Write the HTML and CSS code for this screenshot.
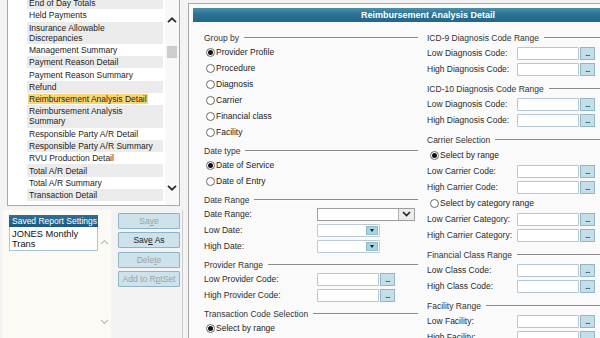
FILE: index.html
```html
<!DOCTYPE html>
<html>
<head>
<meta charset="utf-8">
<title>Reimbursement Analysis Detail</title>
<link rel="stylesheet" href="styles.css">
</head>
<body>
<div class="app">
  <aside class="side">
    <div class="listbox">
      <ul class="reports">
        <li class="alt">End of Day Totals</li>
        <li>Held Payments</li>
        <li class="alt">Insurance Allowable<br>Discrepancies</li>
        <li>Management Summary</li>
        <li class="alt">Payment Reason Detail</li>
        <li>Payment Reason Summary</li>
        <li class="alt">Refund</li>
        <li class="sel"><span>Reimbursement Analysis Detail</span></li>
        <li class="alt">Reimbursement Analysis<br>Summary</li>
        <li>Responsible Party A/R Detail</li>
        <li class="alt">Responsible Party A/R Summary</li>
        <li>RVU Production Detail</li>
        <li class="alt">Total A/R Detail</li>
        <li>Total A/R Summary</li>
        <li class="alt">Transaction Detail</li>
      </ul>
      <div class="vscroll">
        <svg class="chev-up" width="10" height="6" viewBox="0 0 10 6"><path d="M1 5.2 L5 1.3 L9 5.2" fill="none" stroke="#2b2b2b" stroke-width="1.7"/></svg>
        <div class="thumb"></div>
        <svg class="chev-down" width="10" height="6" viewBox="0 0 10 6"><path d="M1 0.8 L5 4.7 L9 0.8" fill="none" stroke="#2b2b2b" stroke-width="1.7"/></svg>
      </div>
    </div>
    <div class="saved-row">
      <div class="saved">
        <div class="saved-list">
          <div class="saved-head">Saved Report Settings</div>
          <div class="saved-item">JONES Monthly<br>Trans</div>
        </div>
        <div class="saved-scroll">
          <svg class="s-up" width="9" height="6" viewBox="0 0 9 6"><path d="M1 5 L4.5 1.5 L8 5" fill="none" stroke="#bdbdbd" stroke-width="1.2"/></svg>
          <svg class="s-down" width="9" height="6" viewBox="0 0 9 6"><path d="M1 1 L4.5 4.5 L8 1" fill="none" stroke="#bdbdbd" stroke-width="1.2"/></svg>
        </div>
      </div>
      <div class="btns">
        <button class="btn off">Sa<u>v</u>e</button>
        <button class="btn">Sav<u>e</u> As</button>
        <button class="btn off">Dele<u>t</u>e</button>
        <button class="btn off">Add to R<u>p</u>tSet</button>
      </div>
    </div>
  </aside>

  <section class="panel">
    <div class="titlebar">Reimbursement Analysis Detail</div>
    <div class="form">
      <div class="col col-a">
        <div class="sec">
          <div class="legend"><span>Group by</span></div>
          <div class="radio on"><i></i>Provider Profile</div>
          <div class="radio"><i></i>Procedure</div>
          <div class="radio"><i></i>Diagnosis</div>
          <div class="radio"><i></i>Carrier</div>
          <div class="radio"><i></i>Financial class</div>
          <div class="radio"><i></i>Facility</div>
        </div>
        <div class="sec">
          <div class="legend"><span>Date type</span></div>
          <div class="radio on"><i></i>Date of Service</div>
          <div class="radio"><i></i>Date of Entry</div>
        </div>
        <div class="sec">
          <div class="legend"><span>Date Range</span></div>
          <div class="row"><span class="lbl">Date Range:</span>
            <div class="select"><div class="sel-box"></div><div class="sel-btn"><svg width="9" height="6" viewBox="0 0 9 6"><path d="M1 1 L4.5 4.5 L8 1" fill="none" stroke="#222" stroke-width="1.6"/></svg></div></div>
          </div>
          <div class="row"><span class="lbl">Low Date:</span>
            <div class="date"><div class="date-box"></div><div class="date-btn"><b></b></div></div>
          </div>
          <div class="row"><span class="lbl">High Date:</span>
            <div class="date"><div class="date-box"></div><div class="date-btn"><b></b></div></div>
          </div>
        </div>
        <div class="sec">
          <div class="legend"><span>Provider Range</span></div>
          <div class="row"><span class="lbl">Low Provider Code:</span>
            <div class="code"><div class="code-box"></div><div class="dots">...</div></div>
          </div>
          <div class="row"><span class="lbl">High Provider Code:</span>
            <div class="code"><div class="code-box"></div><div class="dots">...</div></div>
          </div>
        </div>
        <div class="sec">
          <div class="legend"><span>Transaction Code Selection</span></div>
          <div class="radio on"><i></i>Select by range</div>
        </div>
      </div>

      <div class="col col-b">
        <div class="sec">
          <div class="legend"><span>ICD-9 Diagnosis Code Range</span></div>
          <div class="row"><span class="lbl">Low Diagnosis Code:</span>
            <div class="code"><div class="code-box"></div><div class="dots">...</div></div>
          </div>
          <div class="row"><span class="lbl">High Diagnosis Code:</span>
            <div class="code"><div class="code-box"></div><div class="dots">...</div></div>
          </div>
        </div>
        <div class="sec">
          <div class="legend"><span>ICD-10 Diagnosis Code Range</span></div>
          <div class="row"><span class="lbl">Low Diagnosis Code:</span>
            <div class="code"><div class="code-box"></div><div class="dots">...</div></div>
          </div>
          <div class="row"><span class="lbl">High Diagnosis Code:</span>
            <div class="code"><div class="code-box"></div><div class="dots">...</div></div>
          </div>
        </div>
        <div class="sec">
          <div class="legend"><span>Carrier Selection</span></div>
          <div class="radio on"><i></i>Select by range</div>
          <div class="row"><span class="lbl">Low Carrier Code:</span>
            <div class="code"><div class="code-box"></div><div class="dots">...</div></div>
          </div>
          <div class="row"><span class="lbl">High Carrier Code:</span>
            <div class="code"><div class="code-box"></div><div class="dots">...</div></div>
          </div>
          <div class="radio"><i></i>Select by category range</div>
          <div class="row"><span class="lbl">Low Carrier Category:</span>
            <div class="code"><div class="code-box"></div><div class="dots">...</div></div>
          </div>
          <div class="row"><span class="lbl">High Carrier Category:</span>
            <div class="code"><div class="code-box"></div><div class="dots">...</div></div>
          </div>
        </div>
        <div class="sec">
          <div class="legend"><span>Financial Class Range</span></div>
          <div class="row"><span class="lbl">Low Class Code:</span>
            <div class="code"><div class="code-box"></div><div class="dots">...</div></div>
          </div>
          <div class="row"><span class="lbl">High Class Code:</span>
            <div class="code"><div class="code-box"></div><div class="dots">...</div></div>
          </div>
        </div>
        <div class="sec">
          <div class="legend"><span>Facility Range</span></div>
          <div class="row"><span class="lbl">Low Facility:</span>
            <div class="code"><div class="code-box"></div><div class="dots">...</div></div>
          </div>
          <div class="row"><span class="lbl">High Facility:</span>
            <div class="code"><div class="code-box"></div><div class="dots">...</div></div>
          </div>
        </div>
      </div>
    </div>
  </section>
</div>
</body>
</html>
```

FILE: styles.css
```css
* { box-sizing: border-box; margin: 0; padding: 0; }
html, body { width: 600px; height: 338px; overflow: hidden; }
body {
  background: #f3f3f3;
  font-family: "Liberation Sans", Arial, sans-serif;
  font-size: 8.5px;
  color: #222;
}
.app { display: flex; width: 600px; height: 338px; overflow: hidden; }

/* ---------- left side ---------- */
.side { width: 188px; flex: none; display: flex; flex-direction: column; }
.listbox {
  margin: -3px 0 0 7px;
  width: 173px;
  height: 209px;
  flex: none;
  border: 1px solid #a9a9a9;
  background: #fff;
  display: flex;
  overflow: hidden;
}
.reports { list-style: none; flex: 1; padding: 0 2px 0 19px; margin-top: -1px; overflow: hidden; }
.reports li { line-height: 10px; padding: 1.15px 0 1.15px 2px; color: #1c1c1c; white-space: nowrap; }
.reports li.alt { background: #ebebeb; }
.reports li.sel span { display: inline-block; background: #fdd570; padding: 0 1px; margin-left: -1px; }
.vscroll { width: 14px; flex: none; display: flex; flex-direction: column; align-items: center; background: #f8f8f8; }
.chev-up { margin-top: 19px; }
.thumb { margin-top: 23px; width: 10px; height: 12px; background: #cdcdcd; }
.chev-down { margin-top: auto; margin-bottom: 14px; }

.saved-row {
  margin: 4px 0 0 3px;
  width: 180px;
  flex: 1;
  display: flex;
  border-right: 1px solid #cdcdcd;
}
.saved { width: 108px; flex: none; background: #fbfaf4; display: flex; padding: 5px 0 0 6px; }
.saved-list { width: 89px; flex: none; align-self: flex-start; }
.saved-head {
  height: 12px;
  line-height: 12px;
  background: linear-gradient(#2d6f98, #1d5a82);
  color: #fff;
  padding-left: 3px;
  white-space: nowrap;
}
.saved-item {
  background: #fff;
  border: 1px solid #a9c5d6;
  border-top: none;
  font-size: 9.3px;
  line-height: 10px;
  padding: 2px 2px 3px 2px;
  height: 24px;
  color: #111;
}
.saved-scroll { flex: 1; display: flex; flex-direction: column; align-items: center; }
.s-up { margin-top: 24px; }
.s-down { margin-top: auto; margin-bottom: 13px; }

.btns { margin-left: 7px; padding-top: 3px; width: 62px; display: flex; flex-direction: column; gap: 3.3px; }
.btn {
  height: 16px;
  width: 62px;
  background: #cde2ea;
  border: 1px solid #8db5c7;
  border-radius: 1px;
  font-family: "Liberation Sans", Arial, sans-serif;
  font-size: 8.5px;
  color: #222;
}
.btn.off { color: #9aa2a6; }

/* ---------- right panel ---------- */
.panel {
  margin-top: 3px;
  width: 480px;
  height: 420px;
  flex: none;
  border: 1px solid #a9a9a9;
  background: #fafafa;
}
.titlebar {
  margin: 4px 4px 0;
  height: 14px;
  line-height: 14px;
  text-align: center;
  color: #fff;
  font-weight: bold;
  font-size: 9px;
  background: linear-gradient(#4a90ad, #2b7393 45%, #22678a);
}
.form {
  display: grid;
  grid-template-columns: 214px 1fr;
  column-gap: 9px;
  padding: 9px 0 0 15px;
}
.col-a { padding-top: 1px; }
.sec { margin-bottom: 5px; }
.legend { display: flex; align-items: center; color: #333; white-space: nowrap; }
.col-a .legend { height: 12px; }
.col-b .legend { height: 14px; }
.legend::after { content: ""; flex: 1; margin-left: 5px; border-top: 1px solid #8a8a8a; border-bottom: 1px solid #fdfdfd; }

.radio { height: 16px; display: flex; align-items: center; padding-left: 2px; color: #222; }
.col-b .radio { padding-left: 3px; }
.radio i {
  width: 9px; height: 9px; border-radius: 50%;
  border: 1px solid #6a6a6a; background: #fff;
  margin-right: 1px; display: flex; align-items: center; justify-content: center;
}
.radio.on i::after { content: ""; width: 5px; height: 5px; border-radius: 50%; background: #111; }

.row { height: 16px; display: flex; align-items: center; }
.lbl { flex: none; color: #2a2a2a; white-space: nowrap; }
.col-a .lbl { width: 113px; }
.col-b .lbl { width: 90px; }

.code { width: 78px; height: 13px; display: flex; }
.code-box { flex: 1; background: #fff; border: 1px solid #b5c7d5; border-radius: 1px; }
.dots {
  width: 15px; margin-left: 1px;
  background: #c3dfe8;
  border: 1px solid #93b5c6;
  color: #1b3658;
  font-weight: bold;
  font-size: 7px;
  line-height: 11px;
  text-align: center;
  letter-spacing: -0.5px;
}

.select { width: 98px; height: 13px; display: flex; border: 1px solid #9d9d9d; background: #fff; }
.sel-box { flex: 1; }
.sel-btn { width: 16px; border-left: 1px solid #b0b0b0; background: #ececec; display: flex; align-items: center; justify-content: center; }

.date { width: 63px; height: 13px; display: flex; border: 1px solid #b9c9d6; background: #fff; padding: 1px; border-radius: 1px; }
.date-box { flex: 1; }
.date-btn { width: 12px; background: #a4d5e0; border: 1px solid #8fbccb; display: flex; align-items: center; justify-content: center; }
.date-btn b { width: 0; height: 0; border-left: 2.5px solid transparent; border-right: 2.5px solid transparent; border-top: 3px solid #1a1a1a; }
```
